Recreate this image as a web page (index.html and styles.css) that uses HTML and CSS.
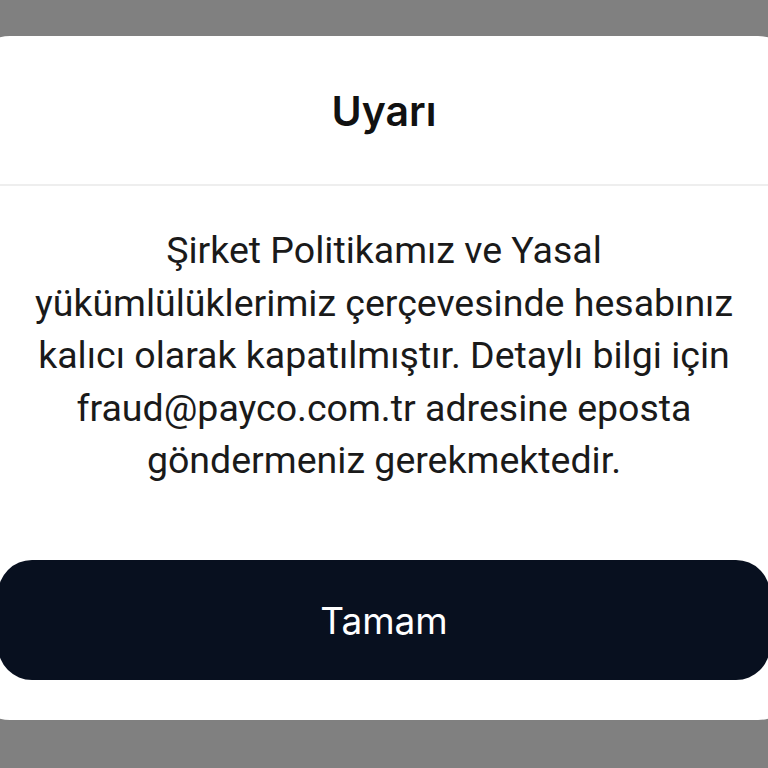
FILE: index.html
```html
<!DOCTYPE html>
<html lang="tr">
<head>
<meta charset="utf-8">
<link rel="stylesheet" href="styles.css">
</head>
<body>
<div class="screen">
  <div class="dialog">
    <div class="dialog-header">
      <h1 class="dialog-title">Uyarı</h1>
    </div>
    <div class="dialog-body">
      <p class="dialog-message">Şirket Politikamız ve Yasal yükümlülüklerimiz çerçevesinde hesabınız kalıcı olarak kapatılmıştır. Detaylı bilgi için fraud@payco.com.tr adresine eposta göndermeniz gerekmektedir.</p>
    </div>
    <div class="dialog-actions">
      <button class="btn-primary">Tamam</button>
    </div>
  </div>
</div>
</body>
</html>
```
FILE: styles.css
```css
html, body {
  margin: 0;
  padding: 0;
  width: 768px;
  height: 768px;
  overflow: hidden;
  background: #808080;
}
.screen {
  display: flex;
  justify-content: center;
  padding-top: 36px;
}
.dialog {
  flex: none;
  width: 828px;
  height: 684px;
  background: #ffffff;
  border-radius: 40px;
  display: flex;
  flex-direction: column;
  box-sizing: border-box;
}
.dialog-header {
  height: 148px;
  display: flex;
  align-items: center;
  justify-content: center;
  border-bottom: 2px solid #eeeeee;
}
.dialog-title {
  margin: 0;
  padding-top: 2px;
  font-family: Inter, "Noto Sans", sans-serif;
  font-weight: 600;
  font-size: 41px;
  color: #111111;
  letter-spacing: 0;
}
.dialog-body {
  padding: 38px 40px 0;
  display: flex;
  justify-content: center;
}
.dialog-message {
  margin: 0;
  width: 720px;
  text-align: center;
  font-family: Roboto, "Noto Sans", sans-serif;
  font-size: 37.5px;
  line-height: 52.5px;
  color: #1a1a1a;
}
.dialog-actions {
  margin-top: auto;
  padding: 0 28px 40px;
  display: flex;
}
.btn-primary {
  flex: 1;
  height: 120px;
  border: none;
  border-radius: 34px;
  background: #08101f;
  color: #ffffff;
  font-family: Inter, "Noto Sans", sans-serif;
  font-size: 37px;
  font-weight: 400;
}
```
